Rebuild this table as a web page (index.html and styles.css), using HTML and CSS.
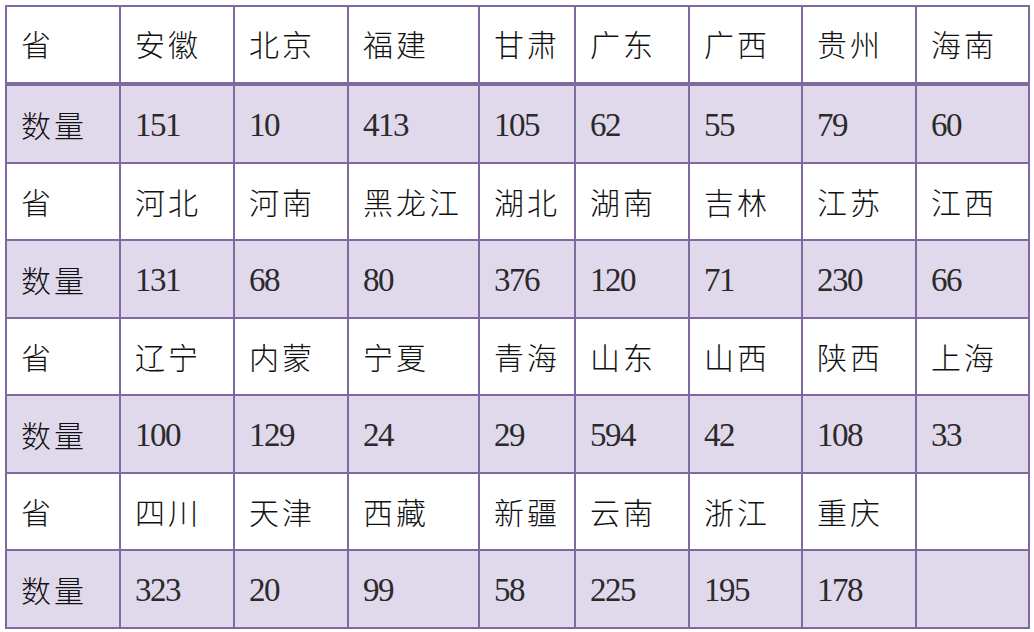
FILE: index.html
```html
<!DOCTYPE html>
<html lang="zh">
<head>
<meta charset="utf-8">
<link rel="stylesheet" href="styles.css">
</head>
<body>
<div class="grid">
  <div class="c h">省</div><div class="c h">安徽</div><div class="c h">北京</div><div class="c h">福建</div><div class="c h">甘肃</div><div class="c h">广东</div><div class="c h">广西</div><div class="c h">贵州</div><div class="c h">海南</div>
  <div class="c q lab">数量</div><div class="c q">151</div><div class="c q">10</div><div class="c q">413</div><div class="c q">105</div><div class="c q">62</div><div class="c q">55</div><div class="c q">79</div><div class="c q">60</div>
  <div class="c">省</div><div class="c">河北</div><div class="c">河南</div><div class="c">黑龙江</div><div class="c">湖北</div><div class="c">湖南</div><div class="c">吉林</div><div class="c">江苏</div><div class="c">江西</div>
  <div class="c q lab">数量</div><div class="c q">131</div><div class="c q">68</div><div class="c q">80</div><div class="c q">376</div><div class="c q">120</div><div class="c q">71</div><div class="c q">230</div><div class="c q">66</div>
  <div class="c">省</div><div class="c">辽宁</div><div class="c">内蒙</div><div class="c">宁夏</div><div class="c">青海</div><div class="c">山东</div><div class="c">山西</div><div class="c">陕西</div><div class="c">上海</div>
  <div class="c q lab">数量</div><div class="c q">100</div><div class="c q">129</div><div class="c q">24</div><div class="c q">29</div><div class="c q">594</div><div class="c q">42</div><div class="c q">108</div><div class="c q">33</div>
  <div class="c">省</div><div class="c">四川</div><div class="c">天津</div><div class="c">西藏</div><div class="c">新疆</div><div class="c">云南</div><div class="c">浙江</div><div class="c">重庆</div><div class="c"></div>
  <div class="c q lab">数量</div><div class="c q">323</div><div class="c q">20</div><div class="c q">99</div><div class="c q">58</div><div class="c q">225</div><div class="c q">195</div><div class="c q">178</div><div class="c q"></div>
</div>
</body>
</html>
```
FILE: styles.css
```css
html, body {
  margin: 0;
  padding: 0;
  background: #ffffff;
}
body {
  padding: 5px 0 0 5px;
  font-family: "Noto Sans CJK SC", sans-serif;
}
.grid {
  display: grid;
  grid-template-columns: 114px 114px 114px 131px 96px 114px 113px 114px 113px;
  grid-template-rows: 79px repeat(7, 77.5px);
  width: max-content;
  border-left: 2px solid #7f69a0;
  border-top: 2px solid #7f69a0;
}
.c {
  border-right: 2px solid #7f69a0;
  border-bottom: 2px solid #7f69a0;
  display: flex;
  align-items: center;
  padding-left: 14px;
  font-size: 30px;
  font-weight: 300;
  letter-spacing: 3px;
  color: #111;
  background: #ffffff;
}
.h {
  border-bottom-width: 4px;
  padding-bottom: 4px;
}
.q {
  background: #e0d9eb;
  font-family: "Liberation Serif", "Noto Sans CJK SC", serif;
  font-size: 33px;
  font-weight: 400;
  letter-spacing: -1.5px;
  color: #2a2a2a;
  padding-top: 4px;
}
.q.lab {
  font-family: "Noto Sans CJK SC", sans-serif;
  font-size: 30px;
  font-weight: 300;
  letter-spacing: 3px;
  color: #111;
  padding-top: 0;
}
```
